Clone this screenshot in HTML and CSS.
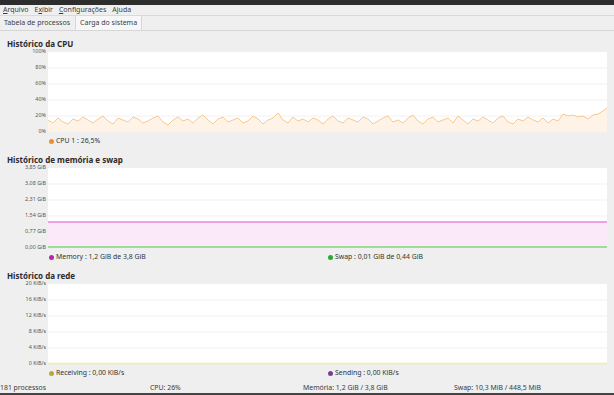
FILE: index.html
```html
<!DOCTYPE html>
<html lang="pt-BR">
<head>
    <meta charset="UTF-8">
    <title>Monitor do sistema</title>
    <link rel="stylesheet" href="styles.css">
</head>
<body>
    <div class="topstrip"></div>
    <div class="menubar">
        <span><u>A</u>rquivo</span>
        <span>E<u>x</u>ibir</span>
        <span><u>C</u>onfigurações</span>
        <span>A<u>j</u>uda</span>
    </div>
    <div class="tabs">
        <div class="tab">Tabela de processos</div>
        <div class="tab active">Carga do sistema</div>
    </div>

    <div class="section">
        <div class="title">Histórico da CPU</div>
        <svg class="chart" width="614" height="86" viewBox="0 0 614 86">
            <rect x="48" y="2" width="559" height="80" fill="#fff"/>
            <g class="grid">
                <line x1="48" x2="607" y1="18" y2="18"/>
                <line x1="48" x2="607" y1="34" y2="34"/>
                <line x1="48" x2="607" y1="50" y2="50"/>
                <line x1="48" x2="607" y1="66" y2="66"/>
            </g>
            <g class="labels">
                <text x="46" y="2">100%</text>
                <text x="46" y="18">80%</text>
                <text x="46" y="34">60%</text>
                <text x="46" y="50">40%</text>
                <text x="46" y="66">20%</text>
                <text x="46" y="82">0%</text>
            </g>
            <polygon fill="#fef3e6" points="48,82 48,70 53,73 58,68 63,72 68,74 73,69 78,71 83,67 88,70 93,73 98,69 103,66 108,71 113,74 118,68 123,70 128,72 133,67 138,69 143,73 148,71 153,68 158,66 163,72 168,75 173,70 178,67 183,71 188,69 193,73 198,68 203,65 208,70 213,74 218,69 223,67 228,72 233,70 238,68 243,73 248,71 253,66 258,69 263,74 268,70 273,68 278,63 283,70 288,73 293,67 298,71 303,69 308,72 313,68 318,70 323,74 328,69 333,66 338,71 343,73 348,68 353,70 358,72 363,67 368,69 373,74 378,71 383,68 388,66 393,72 398,70 403,73 408,68 413,65 418,71 423,74 428,69 433,67 438,72 443,70 448,68 453,73 458,66 463,70 468,74 473,69 478,71 483,67 488,70 493,73 498,68 503,66 508,72 513,74 518,69 523,71 528,67 533,70 538,72 543,68 548,73 553,69 558,71 563,64 568,66 573,65 578,67 583,66 588,69 593,65 598,64 603,61 607,58 607,82"/>
            <polyline class="cpu" points="48,70 53,73 58,68 63,72 68,74 73,69 78,71 83,67 88,70 93,73 98,69 103,66 108,71 113,74 118,68 123,70 128,72 133,67 138,69 143,73 148,71 153,68 158,66 163,72 168,75 173,70 178,67 183,71 188,69 193,73 198,68 203,65 208,70 213,74 218,69 223,67 228,72 233,70 238,68 243,73 248,71 253,66 258,69 263,74 268,70 273,68 278,63 283,70 288,73 293,67 298,71 303,69 308,72 313,68 318,70 323,74 328,69 333,66 338,71 343,73 348,68 353,70 358,72 363,67 368,69 373,74 378,71 383,68 388,66 393,72 398,70 403,73 408,68 413,65 418,71 423,74 428,69 433,67 438,72 443,70 448,68 453,73 458,66 463,70 468,74 473,69 478,71 483,67 488,70 493,73 498,68 503,66 508,72 513,74 518,69 523,71 528,67 533,70 538,72 543,68 548,73 553,69 558,71 563,64 568,66 573,65 578,67 583,66 588,69 593,65 598,64 603,61 607,58"/>
        </svg>
        <div class="legend">
            <div class="item"><span class="dot dot-cpu"></span>CPU 1 : 26,5%</div>
        </div>
    </div>

    <div class="section">
        <div class="title">Histórico de memória e swap</div>
        <svg class="chart" width="614" height="86" viewBox="0 0 614 86">
            <rect x="48" y="2" width="559" height="80" fill="#fff"/>
            <g class="grid">
                <line x1="48" x2="607" y1="18" y2="18"/>
                <line x1="48" x2="607" y1="34" y2="34"/>
                <line x1="48" x2="607" y1="50" y2="50"/>
                <line x1="48" x2="607" y1="66" y2="66"/>
            </g>
            <g class="labels">
                <text x="46" y="2">3,85 GiB</text>
                <text x="46" y="18">3,08 GiB</text>
                <text x="46" y="34">2,31 GiB</text>
                <text x="46" y="50">1,54 GiB</text>
                <text x="46" y="66">0,77 GiB</text>
                <text x="46" y="82">0,00 GiB</text>
            </g>
            <rect x="48" y="56" width="559" height="25" fill="#fbe9fa"/>
            <line class="mem" x1="48" x2="607" y1="56" y2="56"/>
            <line class="swap" x1="48" x2="607" y1="81" y2="81"/>
        </svg>
        <div class="legend">
            <div class="item"><span class="dot dot-mem"></span>Memory : 1,2 GiB de 3,8 GiB</div>
            <div class="item"><span class="dot dot-swap"></span>Swap : 0,01 GiB de 0,44 GiB</div>
        </div>
    </div>

    <div class="section">
        <div class="title">Histórico da rede</div>
        <svg class="chart" width="614" height="86" viewBox="0 0 614 86">
            <rect x="48" y="2" width="559" height="80" fill="#fff"/>
            <g class="grid">
                <line x1="48" x2="607" y1="18" y2="18"/>
                <line x1="48" x2="607" y1="34" y2="34"/>
                <line x1="48" x2="607" y1="50" y2="50"/>
                <line x1="48" x2="607" y1="66" y2="66"/>
            </g>
            <g class="labels">
                <text x="46" y="2">20 KiB/s</text>
                <text x="46" y="18">16 KiB/s</text>
                <text x="46" y="34">12 KiB/s</text>
                <text x="46" y="50">8 KiB/s</text>
                <text x="46" y="66">4 KiB/s</text>
                <text x="46" y="82">0 KiB/s</text>
            </g>
            <line class="net" x1="48" x2="607" y1="81.5" y2="81.5"/>
        </svg>
        <div class="legend">
            <div class="item"><span class="dot dot-recv"></span>Receiving : 0,00 KiB/s</div>
            <div class="item"><span class="dot dot-send"></span>Sending : 0,00 KiB/s</div>
        </div>
    </div>

    <div class="statusbar">
        <span>181 processos</span>
        <span>CPU: 26%</span>
        <span>Memória: 1,2 GiB / 3,8 GiB</span>
        <span>Swap: 10,3 MiB / 448,5 MiB</span>
    </div>
    <div class="bottomstrip"></div>
</body>
</html>
```
FILE: styles.css
```css
body {
    margin: 0;
    width: 614px;
    height: 395px;
    overflow: hidden;
    background-color: #efefef;
    font-family: "Noto Sans", "DejaVu Sans", sans-serif;
    color: #333;
}
.topstrip {
    height: 5px;
    background-color: #2d2d2d;
}
.menubar {
    height: 10px;
    display: flex;
    gap: 6px;
    padding-left: 3px;
    font-size: 7px;
    line-height: 10px;
    color: #3c3c3c;
    border-bottom: 1px solid #dadada;
}
.menubar u {
    text-decoration-thickness: 0.5px;
}
.tabs {
    height: 14px;
    display: flex;
    border-bottom: 1px solid #d6d6d6;
}
.tab {
    padding: 0 4px;
    font-size: 7px;
    line-height: 14px;
    color: #3c3c3c;
}
.tab.active {
    margin-left: 1px;
    background-color: #f7f7f7;
    border-left: 1px solid #d6d6d6;
    border-right: 1px solid #d6d6d6;
}
.section {
    margin-top: 7px;
}
.section + .section {
    margin-top: 8px;
}
.title {
    height: 12px;
    padding-left: 7px;
    font-size: 8px;
    font-weight: bold;
    line-height: 12px;
    color: #2a2a2a;
}
.chart {
    display: block;
    overflow: visible;
}
.grid line {
    stroke: #f1f1f1;
    stroke-width: 1;
}
.labels text {
    font-size: 5.4px;
    fill: #555;
    text-anchor: end;
    dominant-baseline: middle;
}
.cpu {
    fill: none;
    stroke: #f6c992;
    stroke-width: 1;
    stroke-linejoin: round;
}
.mem {
    stroke: #e887dc;
    stroke-width: 1.5;
}
.swap {
    stroke: #7bd674;
    stroke-width: 1.3;
}
.net {
    stroke: #f2ef9c;
    stroke-width: 1.5;
}
.legend {
    height: 10px;
    display: grid;
    grid-template-columns: 279px 1fr;
    padding-left: 49px;
    font-size: 6.9px;
    line-height: 10px;
    color: #333;
}
.item {
    display: flex;
    align-items: center;
    gap: 2px;
}
.dot {
    width: 5px;
    height: 5px;
    border-radius: 50%;
}
.dot-cpu { background-color: #e99131; }
.dot-mem { background-color: #b42aa6; }
.dot-swap { background-color: #2aa834; }
.dot-recv { background-color: #b5a83a; }
.dot-send { background-color: #7b3e98; }
.statusbar {
    margin-top: 5px;
    height: 10px;
    display: grid;
    grid-template-columns: 150px 153px 151px 1fr;
    font-size: 6.9px;
    line-height: 10px;
    color: #3a3a3a;
}
.bottomstrip {
    height: 3px;
    background-color: #444;
}
```
